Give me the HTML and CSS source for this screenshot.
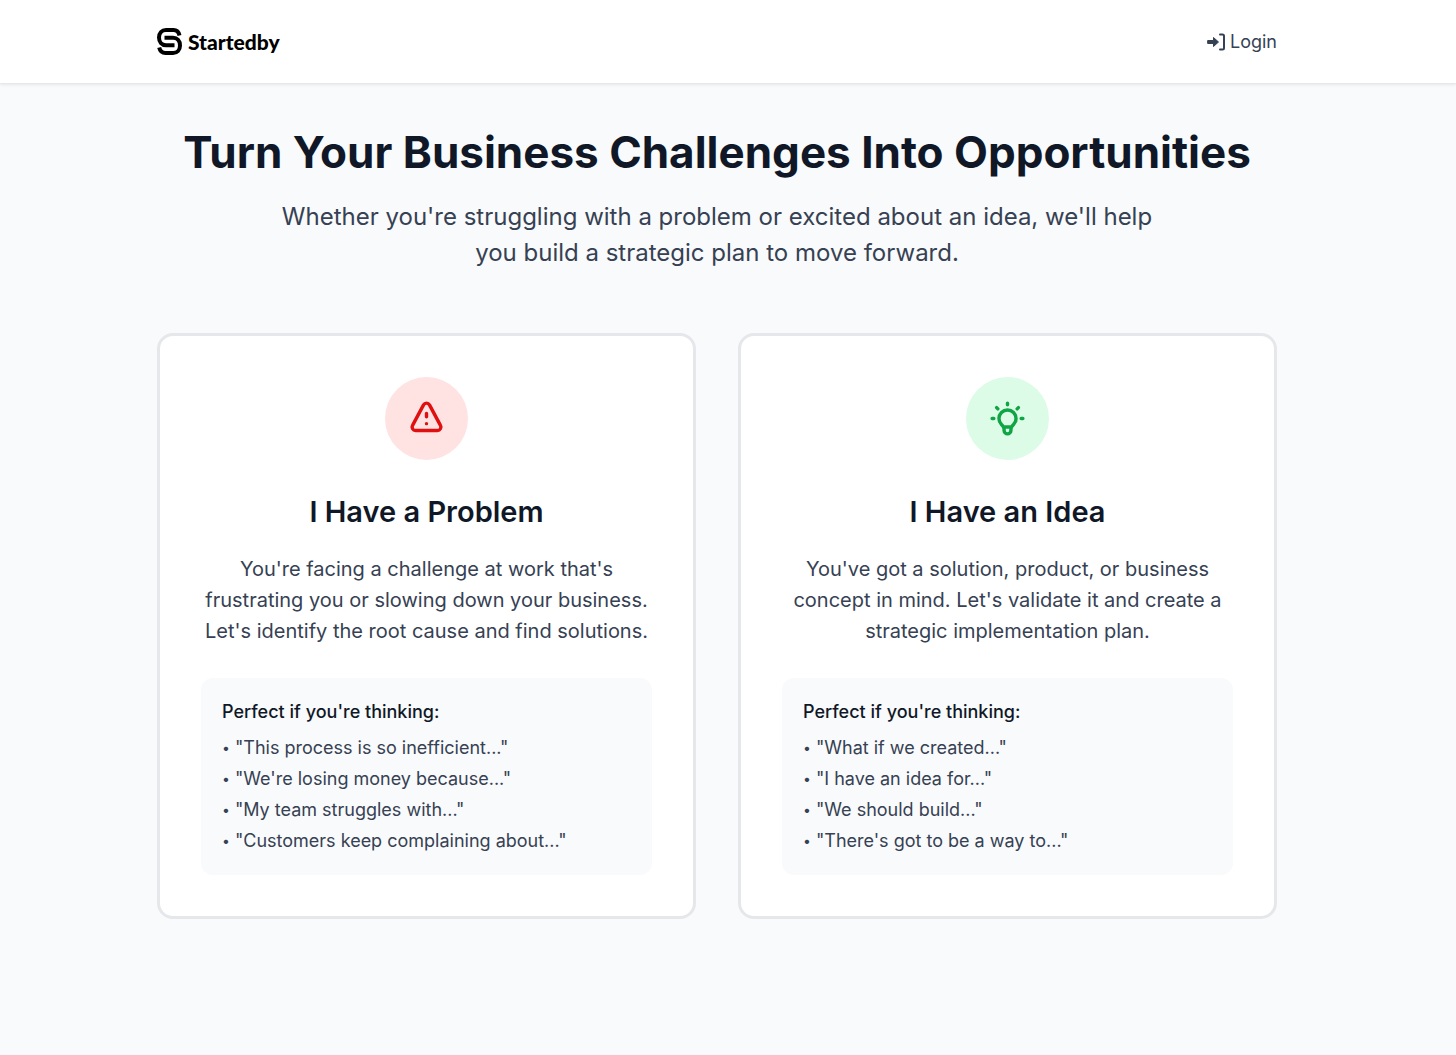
FILE: index.html
```html
<!DOCTYPE html>
<html lang="en">
<head>
    <meta charset="UTF-8">
    <meta name="viewport" content="width=device-width, initial-scale=1.0">
    <title>Startedby</title>
    <link rel="stylesheet" href="styles.css">
</head>
<body>
    <header class="site-header">
        <nav class="container nav">
            <a href="#" class="brand">
                <svg class="brand-icon" viewBox="0 0 25 27" fill="none" stroke="currentColor" stroke-width="4" aria-hidden="true">
                    <path d="M22.500 7.500C21.800 4 19.500 2 16.500 2H9C4.800 2 2 5 2 9.600S4.800 17.300 9 17.300H17.500"/>
                    <path d="M2.200 19.500C3 23 5.300 25 8.500 25H16C20.200 25 23 22 23 17.400S20.200 9.700 16 9.700H7.500"/>
                </svg>
                <span>Startedby</span>
            </a>
            <a href="#login" class="login">
                <svg class="login-icon" viewBox="0 0 18 18" fill="none" stroke="currentColor" stroke-width="2" stroke-linejoin="round" stroke-linecap="round" aria-hidden="true">
                    <path d="M1 7.500h5.500V4.500L11.500 9l-5 4.500V10.500H1z" fill="currentColor" stroke-width="1"/>
                    <path d="M13 1.500h2.500A1.500 1.500 0 0 1 17 3v12a1.500 1.500 0 0 1-1.500 1.500H13"/>
                </svg>
                <span>Login</span>
            </a>
        </nav>
    </header>

    <main class="container">
        <section class="hero">
            <h1>Turn Your Business Challenges Into Opportunities</h1>
            <p>Whether you're struggling with a problem or excited about an idea, we'll help you build a strategic plan to move forward.</p>
        </section>

        <section class="cards">
            <a href="#problem" class="card">
                <div class="icon-circle problem">
                    <svg viewBox="0 0 24 24" fill="none" stroke="currentColor" stroke-width="2" stroke-linecap="round" stroke-linejoin="round" aria-hidden="true">
                        <path d="M12 9v2m0 4h.01m-6.438 4h12.856c1.540 0 2.502-1.667 1.732-3L13.732 4c-.77-1.333-2.694-1.333-3.464 0L3.840 16c-.77 1.333.192 3 1.732 3z"/>
                    </svg>
                </div>
                <h2>I Have a Problem</h2>
                <p>You're facing a challenge at work that's frustrating you or slowing down your business. Let's identify the root cause and find solutions.</p>
                <div class="thinking">
                    <h3>Perfect if you're thinking:</h3>
                    <ul>
                        <li>"This process is so inefficient..."</li>
                        <li>"We're losing money because..."</li>
                        <li>"My team struggles with..."</li>
                        <li>"Customers keep complaining about..."</li>
                    </ul>
                </div>
            </a>

            <a href="#idea" class="card">
                <div class="icon-circle idea">
                    <svg viewBox="0 0 24 24" fill="none" stroke="currentColor" stroke-width="2" stroke-linecap="round" stroke-linejoin="round" aria-hidden="true">
                        <path d="M9.663 17h4.673M12 3v1m6.364 1.636l-.707.707M21 12h-1M4 12H3m3.343-5.657l-.707-.707m2.828 9.900a5 5 0 1 1 7.072 0l-.548.547A3.374 3.374 0 0 0 14 18.469V19a2 2 0 1 1-4 0v-.531c0-.895-.356-1.754-.988-2.386l-.548-.547z"/>
                    </svg>
                </div>
                <h2>I Have an Idea</h2>
                <p>You've got a solution, product, or business concept in mind. Let's validate it and create a strategic implementation plan.</p>
                <div class="thinking">
                    <h3>Perfect if you're thinking:</h3>
                    <ul>
                        <li>"What if we created..."</li>
                        <li>"I have an idea for..."</li>
                        <li>"We should build..."</li>
                        <li>"There's got to be a way to..."</li>
                    </ul>
                </div>
            </a>
        </section>
    </main>
</body>
</html>
```
FILE: styles.css
```css
* {
    box-sizing: border-box;
    margin: 0;
    padding: 0;
}

body {
    font-family: Inter, "Liberation Sans", sans-serif;
    padding-right: 22px;
    background: #f9fafb;
    color: #364153;
}

a {
    color: inherit;
    text-decoration: none;
}

.container {
    max-width: 1162px;
    margin: 0 auto;
    padding: 0 21px;
}

.site-header {
    margin-right: -22px;
    padding-right: 22px;
    background: #fff;
    border-bottom: 1px solid #e5e7eb;
    box-shadow: 0 1px 3px rgba(0, 0, 0, 0.08);
}

.nav {
    display: flex;
    align-items: center;
    justify-content: space-between;
    height: 83px;
}

.brand {
    display: flex;
    align-items: center;
    gap: 6px;
    font-family: Lato, sans-serif;
    font-size: 21px;
    font-weight: 900;
    color: #000;
}

.brand-icon {
    width: 25px;
    height: 27px;
}

.login {
    display: flex;
    align-items: center;
    gap: 5px;
    font-size: 18px;
}

.login-icon {
    width: 18px;
    height: 18px;
}

.hero {
    padding: 42px 0 62px;
    text-align: center;
}

.hero h1 {
    margin-bottom: 21px;
    font-size: 44px;
    line-height: 52px;
    font-weight: 700;
    color: #101828;
}

.hero p {
    max-width: 880px;
    margin: 0 auto;
    font-size: 24px;
    line-height: 36px;
}

.cards {
    display: grid;
    grid-template-columns: repeat(auto-fit, minmax(400px, 1fr));
    gap: 42px;
}

.card {
    padding: 41px;
    background: #fff;
    border: 3px solid #e5e7eb;
    border-radius: 16px;
    text-align: center;
}

.card:hover {
    border-color: #d1d5dc;
}

.icon-circle {
    display: flex;
    align-items: center;
    justify-content: center;
    width: 83px;
    height: 83px;
    margin: 0 auto 31px;
    border-radius: 50%;
}

.icon-circle svg {
    width: 41px;
    height: 41px;
}

.problem {
    background: #ffe2e2;
    color: #e01010;
}

.idea {
    background: #dcfce7;
    color: #0fa544;
}

.card h2 {
    margin-bottom: 21px;
    font-size: 29px;
    line-height: 42px;
    font-weight: 600;
    color: #101828;
}

.card p {
    margin-bottom: 31px;
    font-size: 20px;
    line-height: 31px;
}

.thinking {
    padding: 21px;
    background: #f9fafb;
    border-radius: 12px;
    text-align: left;
}

.thinking h3 {
    margin-bottom: 10px;
    font-size: 18px;
    line-height: 26px;
    font-weight: 500;
    color: #101828;
}

.thinking ul {
    display: grid;
    gap: 5px;
    list-style: none;
}

.thinking li {
    display: flex;
    gap: 5px;
    font-size: 18px;
    line-height: 26px;
}

.thinking li::before {
    content: "•";
    font-size: 14px;
}
```
